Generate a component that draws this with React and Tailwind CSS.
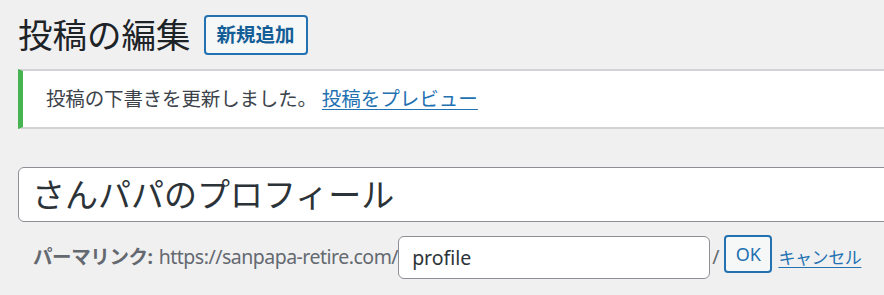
export default function App() {
  const font = { fontFamily: '"Noto Sans", "Noto Sans CJK JP", sans-serif' };
  return (
    <div
      className="w-[884px] h-[295px] overflow-hidden bg-[#f0f0f1] pl-[18px] pt-[15px] text-[#3c434a]"
      style={font}
    >
      <div className="flex items-center h-[40px]">
        <h1 className="text-[34.5px] leading-none text-[#1d2327] font-normal m-0">投稿の編集</h1>
        <button className="ml-[13px] h-[40px] w-[104px] border-2 border-[#2271b1] rounded-[4px] bg-[#f6f7f7] text-[#135e96] text-[19.5px] font-bold leading-none flex items-center justify-center">
          新規追加
        </button>
      </div>

      <div className="mt-[14px] w-[900px] h-[60px] bg-white border-l-[5px] border-l-[#46b450] border-y-2 border-y-[#d2d3d6] flex items-center pl-[23px]">
        <p className="text-[19.5px] leading-none tracking-[-0.15px] text-[#3c434a]">
          投稿の下書きを更新しました。{" "}
          <a href="#" className="text-[#2271b1] underline underline-offset-[3px] tracking-normal">
            投稿をプレビュー
          </a>
        </p>
      </div>

      <div className="mt-[38px] w-[900px] h-[55px] bg-white border-[1.5px] border-[#8c8f94] rounded-[6px] flex items-center pl-[13px]">
        <span className="text-[33px] leading-none text-[#2c3338]">さんパパのプロフィール</span>
      </div>

      <div className="mt-[13px] flex items-center h-[44px] pl-[15px]">
        <span className="text-[19.5px] font-bold text-[#646970] leading-none tracking-[-0.4px]">パーマリンク:</span>
        <span className="ml-[6px] text-[19.5px] text-[#646970] leading-none tracking-[-0.5px]">https://sanpapa-retire.com/</span>
        <div className="w-[312px] h-[43px] bg-white border-[1.5px] border-[#8c8f94] rounded-[6px] flex items-center pl-[13px] self-end">
          <span className="text-[19.5px] leading-none text-[#2c3338]">profile</span>
        </div>
        <span className="ml-[2px] text-[19.5px] text-[#646970] leading-none">/</span>
        <button className="ml-[5px] self-start h-[38px] w-[48px] border-2 border-[#2271b1] rounded-[4px] bg-[#f6f7f7] text-[#2271b1] text-[18px] leading-none flex items-center justify-center">
          OK
        </button>
        <a href="#" className="ml-[6px] text-[17px] leading-none text-[#2271b1] underline underline-offset-[3px] tracking-[-0.4px]">
          キャンセル
        </a>
      </div>
    </div>
  );
}
